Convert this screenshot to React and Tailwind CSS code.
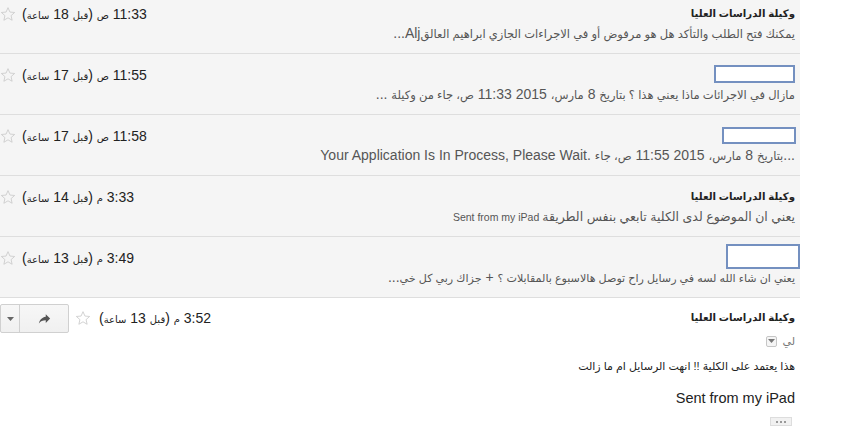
import React from 'react';

const FONT = "font-['Liberation_Sans','DejaVu_Sans',sans-serif]";
const AR = /([\u0600-\u06FF][\u0600-\u06FF\s]*[\u0600-\u06FF]|[\u0600-\u06FF])/;

// Arabic runs fall back to DejaVu, which is much wider than Arial's Arabic,
// so they get a smaller size than the latin/digit runs.
function Mixed({ text, ar, lat }) {
  return text.split(AR).map((part, i) =>
    part === '' ? null : (
      <span key={i} className={AR.test(part) ? ar : lat}>
        {part}
      </span>
    )
  );
}

function Star({ className = '' }) {
  return (
    <svg width="16" height="16" viewBox="0 0 24 24" className={className}>
      <path
        d="M12 2.5l2.9 6.6 7.1.6-5.4 4.7 1.6 7-6.2-3.7-6.2 3.7 1.6-7L2 9.7l7.1-.6z"
        fill="none"
        stroke="#c8c8c8"
        strokeWidth="1.2"
        strokeLinejoin="round"
      />
    </svg>
  );
}

function Redacted({ className }) {
  return <div className={`absolute bg-white border-2 border-[#7490c0] ${className}`} />;
}

const rows = [
  {
    name: 'وكيلة الدراسات العليا',
    time: '11:33 ص (قبل 18 ساعة)',
    snippet: 'يمكنك فتح الطلب والتأكد هل هو مرفوض أو في الاجراءات الجازي ابراهيم العالقAlj...',
  },
  {
    box: 'top-[11px] right-[5px] w-[81px] h-[18px]',
    time: '11:55 ص (قبل 17 ساعة)',
    snippet: 'مازال في الاجرائات ماذا يعني هذا ؟ بتاريخ 8 مارس، 2015 11:33 ص، جاء من وكيلة ...',
  },
  {
    box: 'top-[12px] right-[4px] w-[74px] h-[17px]',
    time: '11:58 ص (قبل 17 ساعة)',
    snippet: '...بتاريخ 8 مارس، 2015 11:55 ص، جاء .Your Application Is In Process, Please Wait',
  },
  {
    name: 'وكيلة الدراسات العليا',
    time: '3:33 م (قبل 14 ساعة)',
    snippet: 'يعني ان الموضوع لدى الكلية تابعي بنفس الطريقة Sent from my iPad',
    ar: 'text-[12.5px]',
    lat: 'text-[10.5px]',
  },
  {
    box: 'top-[7px] right-0 w-[74px] h-[25px]',
    time: '3:49 م (قبل 13 ساعة)',
    snippet: 'يعني ان شاء الله لسه في رسايل راح توصل هالاسبوع بالمقابلات ؟ + جزاك ربي كل خي...',
    ar: 'text-[11.1px]',
  },
];

function Time({ text }) {
  return (
    <div className="h-[16px] leading-[16px] text-[#222] whitespace-nowrap">
      <Mixed text={text} ar="text-[10px]" lat="text-[14px]" />
    </div>
  );
}

function CollapsedRow({ row }) {
  return (
    <div className="relative h-[61px] bg-[#f5f5f5] border-b border-[#dedede] flex justify-between pr-[5px]">
      <div className="pt-[13px] min-w-0">
        <div className="h-[16px] leading-[16px] text-[10.2px] font-bold text-[#222]">{row.name}</div>
        <div className="mt-[2px] h-[18px] leading-[18px] text-[#555] whitespace-nowrap">
          <Mixed text={row.snippet} ar={row.ar || 'text-[11.5px]'} lat={row.lat || 'text-[14px]'} />
        </div>
      </div>
      <div className="pt-[13px] flex items-start gap-[6px]">
        <Time text={row.time} />
        <Star />
      </div>
      {row.box && <Redacted className={row.box} />}
    </div>
  );
}

function ExpandedRow() {
  return (
    <div className="bg-white flex justify-between pr-[5px]">
      <div className="pt-[12px]">
        <div className="h-[16px] leading-[16px] text-[10.2px] font-bold text-[#222]">وكيلة الدراسات العليا</div>
        <div className="mt-[7px] flex items-center gap-[5px] h-[16px] text-[11px] text-[#777]">
          <span>لي</span>
          <span className="w-[11px] h-[11px] border border-[#c6c6c6] rounded-[2px] bg-[#f5f5f5] flex items-center justify-center">
            <svg width="7" height="4" viewBox="0 0 7 4"><path d="M0 0h7L3.5 4z" fill="#777" /></svg>
          </span>
        </div>
        <div className="mt-[9px] h-[16px] leading-[16px] text-[11px] text-[#222]">
          هذا يعتمد على الكلية !! انهت الرسايل ام ما زالت
        </div>
        <div className="mt-[15px] h-[18px] leading-[18px] text-[14.5px] text-[#222]" dir="ltr" style={{ textAlign: 'right' }}>
          Sent from my iPad
        </div>
        <div className="mt-[10px] flex justify-start pr-[3px]">
          <div className="w-[22px] h-[9px] border border-[#ddd] bg-[#f1f1f1] flex items-center justify-center gap-[2px]">
            <span className="w-[2px] h-[2px] bg-[#999]" />
            <span className="w-[2px] h-[2px] bg-[#999]" />
            <span className="w-[2px] h-[2px] bg-[#999]" />
          </div>
        </div>
      </div>
      <div className="pt-[6px] flex items-start">
        <div className="pt-[6px]">
          <Time text="3:52 م (قبل 13 ساعة)" />
        </div>
        <Star className="mt-[6px] mr-[8px] ml-[6px]" />
        <div className="flex h-[29px] border border-[#d0d0d0] rounded-[2px] bg-gradient-to-b from-[#f7f7f7] to-[#f0f0f0]" dir="ltr">
          <div className="w-[19px] flex items-center justify-center border-r border-[#d0d0d0]">
            <svg width="7" height="4" viewBox="0 0 7 4"><path d="M0 0h7L3.5 4z" fill="#666" /></svg>
          </div>
          <div className="w-[48px] flex items-center justify-center">
            <svg width="15" height="15" viewBox="0 0 24 24">
              <path d="M14 9V5l7 7-7 7v-4.1c-5 0-8.5 1.6-11 5.1 1-5 4-10 11-11z" fill="#555" />
            </svg>
          </div>
        </div>
      </div>
    </div>
  );
}

export default function App() {
  return (
    <div dir="rtl" className={`w-[848px] h-[435px] overflow-hidden bg-white ${FONT}`}>
      <div className="w-[800px] mr-auto -mt-[7px]">
        {rows.map((r, i) => (
          <CollapsedRow key={i} row={r} />
        ))}
        <ExpandedRow />
      </div>
    </div>
  );
}
